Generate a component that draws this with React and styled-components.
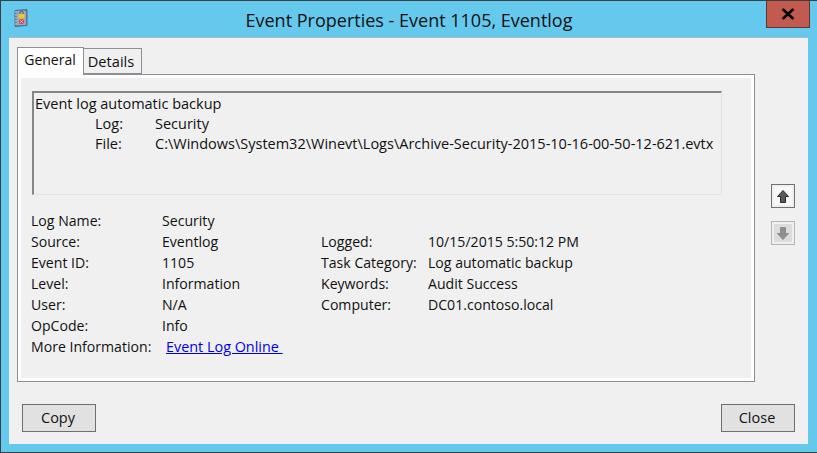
import React from "react";
import styled, { createGlobalStyle } from "styled-components";

const GlobalStyle = createGlobalStyle`
  html, body {
    margin: 0;
    padding: 0;
    background: #64c9ec;
  }
  * {
    box-sizing: border-box;
  }
`;

const Win = styled.div`
  width: 817px;
  height: 453px;
  display: flex;
  flex-direction: column;
  background: #64c9ec;
  border: 1px solid #3a3f42;
  border-right: none;
  font-family: "Open Sans", "Noto Sans", sans-serif;
  font-size: 14px;
  color: #111;
  overflow: hidden;
`;

const TitleBar = styled.div`
  height: 36px;
  flex: none;
  display: flex;
  align-items: flex-start;
  padding: 0 7px 0 13px;
`;

const AppIcon = styled.svg`
  width: 14px;
  height: 18px;
  margin-top: 8px;
  flex: none;
`;

const Title = styled.div`
  flex: 1;
  text-align: center;
  font-size: 18px;
  line-height: 38px;
  color: #111;
  padding-left: 24px;
`;

const CloseX = styled.div`
  width: 44px;
  height: 27px;
  background: #c35a50;
  border: 1px solid #5d3431;
  border-top: none;
  display: flex;
  align-items: center;
  justify-content: center;
  flex: none;
`;

const Client = styled.div`
  margin: 0 9px 0 8px;
  height: 407px;
  background: #f0f0f0;
  border-top: 1px solid #a9bcc6;
  padding: 8px 8px 0 8px;
  display: flex;
  flex-direction: column;
`;

const TabRow = styled.div`
  display: flex;
  align-items: flex-end;
  height: 28px;
  position: relative;
  z-index: 1;
`;

const Tab = styled.div`
  height: ${(p) => (p.$active ? "28px" : "26px")};
  width: ${(p) => (p.$active ? "67px" : "58px")};
  margin-bottom: ${(p) => (p.$active ? "-1px" : "0")};
  padding-right: ${(p) => (p.$active ? "1px" : "3px")};
  background: ${(p) => (p.$active ? "#fff" : "#f0f0f0")};
  border: 1px solid #8e8f94;
  border-bottom: ${(p) => (p.$active ? "none" : "1px solid #8e8f94")};
  border-left: ${(p) => (p.$active ? "1px solid #8e8f94" : "none")};
  font-size: ${(p) => (p.$active ? "14px" : "14.6px")};
  text-align: center;
  line-height: ${(p) => (p.$active ? "24px" : "24px")};
`;

const Body = styled.div`
  display: flex;
`;

const Panel = styled.div`
  width: 738px;
  height: 308px;
  background: #f0f0f0;
  border: 1px solid #8e8f94;
  box-shadow: inset 0 0 0 3px #fff;
  padding: 16px 0 0 14px;
`;

const Message = styled.div`
  width: 690px;
  height: 104px;
  background: #f0f0f0;
  border: 2px solid #82878a;
  border-right: 1px solid #e3e3e3;
  border-bottom: 1px solid #e3e3e3;
  padding: 1px 0 0 1px;
  font-size: 14.5px;
  line-height: 20px;
`;

const MessageRow = styled.div`
  display: flex;
  padding-left: 60px;
`;

const MessageLabel = styled.span`
  width: 60px;
`;

const Fields = styled.div`
  margin: 15px 0 0 -1px;
  display: grid;
  grid-template-columns: 131px 159px 107px 1fr;
  grid-auto-rows: 21px;
  font-size: 14.1px;
  line-height: 21px;
`;

const Link = styled.a`
  color: #0000e6;
  font-size: 14.4px;
  text-decoration: underline;
  margin-left: 4px;
  white-space: pre;
`;

const ArrowColumn = styled.div`
  display: flex;
  flex-direction: column;
  gap: 13px;
  padding: 110px 0 0 16px;
`;

const ArrowButton = styled.div`
  width: 24px;
  height: 24px;
  background: ${(p) => (p.$disabled ? "#dcdcdc" : "#f8f8f8")};
  border: 1px solid ${(p) => (p.$disabled ? "#b5b5b5" : "#707070")};
  box-shadow: inset 0 0 0 2px #f0f0f0;
  display: flex;
  align-items: center;
  justify-content: center;
`;

const Footer = styled.div`
  display: flex;
  justify-content: space-between;
  padding: 22px 5px 0 5px;
`;

const Button = styled.div`
  width: 74px;
  height: 28px;
  padding-right: 2px;
  background: #e1e1e1;
  border: 1px solid #6f6f6f;
  font-size: 14.5px;
  text-align: center;
  line-height: 25px;
`;

const fields = [
  ["Log Name:", "Security", "", ""],
  ["Source:", "Eventlog", "Logged:", "10/15/2015 5:50:12 PM"],
  ["Event ID:", "1105", "Task Category:", "Log automatic backup"],
  ["Level:", "Information", "Keywords:", "Audit Success"],
  ["User:", "N/A", "Computer:", "DC01.contoso.local"],
  ["OpCode:", "Info", "", ""],
];

const Arrow = ({ down, color, edge }) => (
  <svg width="12" height="13" viewBox="0 0 12 13">
    <path
      d={down ? "M3.5.5h5v6h3L6 12.5.5 6.5h3z" : "M6 .5l5.500 6h-3v6h-5v-6h-3z"}
      fill={color}
      stroke={edge}
      strokeWidth="1"
    />
  </svg>
);

const App = () => (
  <>
    <GlobalStyle />
    <Win>
      <TitleBar>
        <AppIcon viewBox="0 0 14 18">
          <path d="M1 1.500L13 .5v16L1 17.500z" fill="#6f84aa" stroke="#4f5c78" strokeWidth="0.8" />
          <rect x="3" y="2" width="9" height="14" fill="#98a8c4" />
          <path d="M1 3h2M1 6h2M1 9h2M1 12h2M1 15h2" stroke="#dfe4ec" strokeWidth="0.8" />
          <rect x="4.500" y="5" width="6" height="4.500" fill="#e8cb26" />
          <path d="M5.800 5V4a1.700 1.700 0 0 1 3.400 0v1" fill="none" stroke="#5f5a28" strokeWidth="0.9" />
          <circle cx="7.500" cy="12.500" r="2.600" fill="#d2484c" />
          <path d="M6.400 11.400l2.200 2.200M8.600 11.400l-2.200 2.200" stroke="#fff" strokeWidth="0.8" />
        </AppIcon>
        <Title>Event Properties - Event 1105, Eventlog</Title>
        <CloseX>
          <svg width="14" height="12" viewBox="0 0 14 12">
            <path d="M1.500 1l11 10M12.500 1l-11 10" stroke="#000" strokeWidth="2.6" />
          </svg>
        </CloseX>
      </TitleBar>
      <Client>
        <TabRow>
          <Tab $active>General</Tab>
          <Tab>Details</Tab>
        </TabRow>
        <Body>
          <Panel>
            <Message>
              <div>Event log automatic backup</div>
              <MessageRow>
                <MessageLabel>Log:</MessageLabel>
                <span>Security</span>
              </MessageRow>
              <MessageRow>
                <MessageLabel>File:</MessageLabel>
                <span>C:\Windows\System32\Winevt\Logs\Archive-Security-2015-10-16-00-50-12-621.evtx</span>
              </MessageRow>
            </Message>
            <Fields>
              {fields.map((row) =>
                row.map((cell, i) => <div key={row[0] + i}>{cell}</div>)
              )}
              <div>More Information:</div>
              <div>
                <Link>Event Log Online </Link>
              </div>
            </Fields>
          </Panel>
          <ArrowColumn>
            <ArrowButton>
              <Arrow color="#5a5a5a" edge="#2a2a2a" />
            </ArrowButton>
            <ArrowButton $disabled>
              <Arrow down color="#8f8f8f" edge="#8a8a8a" />
            </ArrowButton>
          </ArrowColumn>
        </Body>
        <Footer>
          <Button>Copy</Button>
          <Button>Close</Button>
        </Footer>
      </Client>
    </Win>
  </>
);

export default App;
